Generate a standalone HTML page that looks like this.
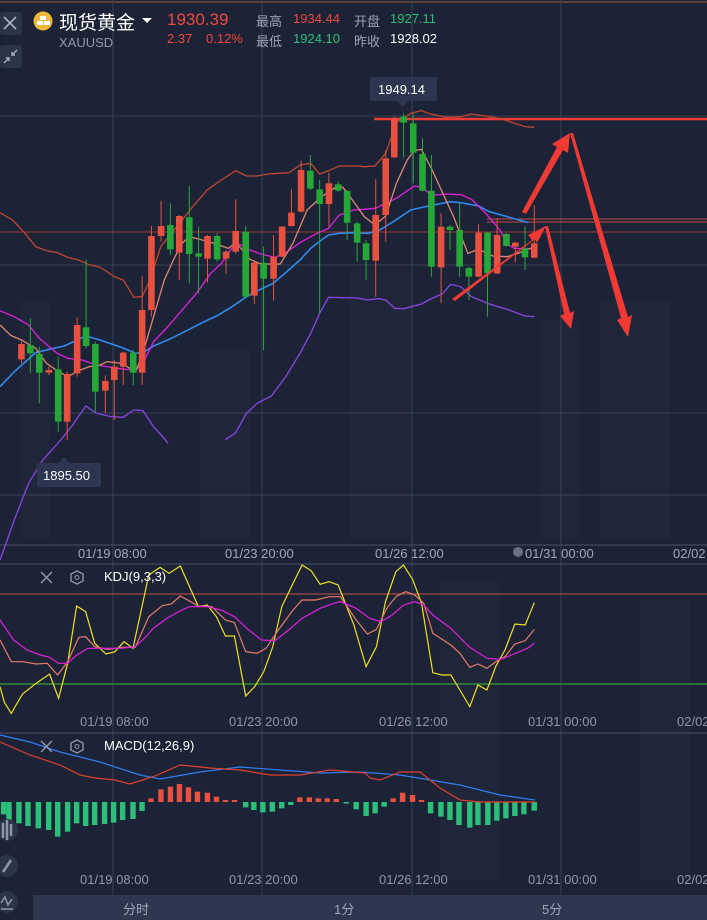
<!DOCTYPE html>
<html><head><meta charset="utf-8"><style>
html,body{margin:0;padding:0;background:#1c2336;width:707px;height:920px;overflow:hidden;font-family:"Liberation Sans","Noto Sans CJK SC",sans-serif}
.t{position:absolute;white-space:nowrap}
</style></head><body>
<svg width="707" height="920" style="position:absolute;left:0;top:0" xmlns="http://www.w3.org/2000/svg">
<rect width="707" height="920" fill="#1c2336"/>
<line x1="0" y1="2" x2="707" y2="2" stroke="#6e4a35" stroke-width="1.5"/>
<g fill="#1f2639">
<rect x="20" y="300" width="30" height="240"/><rect x="200" y="350" width="50" height="190"/><rect x="350" y="270" width="60" height="270"/><rect x="540" y="320" width="40" height="220"/><rect x="600" y="300" width="70" height="240"/><rect x="440" y="580" width="60" height="300"/><rect x="640" y="600" width="50" height="280"/>
</g>
<g stroke="#39415a" stroke-width="1">
<line x1="113" y1="0" x2="113" y2="895"/><line x1="262" y1="0" x2="262" y2="895"/><line x1="412" y1="0" x2="412" y2="895"/><line x1="561" y1="0" x2="561" y2="895"/>
<line x1="0" y1="116" x2="707" y2="116"/><line x1="0" y1="265" x2="707" y2="265"/><line x1="0" y1="413" x2="707" y2="413"/><line x1="0" y1="495" x2="707" y2="495"/>
<line x1="0" y1="545" x2="707" y2="545" stroke="#4a5268"/><line x1="0" y1="564" x2="707" y2="564" stroke="#4a5268"/><line x1="0" y1="733" x2="707" y2="733" stroke="#4a5268"/>
</g>
<line x1="0" y1="232" x2="707" y2="232" stroke="#9a3a35" stroke-width="1"/>
<line x1="487" y1="219" x2="707" y2="219" stroke="#c24a44" stroke-width="1"/>
<line x1="487" y1="222" x2="707" y2="222" stroke="#c24a44" stroke-width="1"/>
<line x1="374" y1="119" x2="707" y2="119" stroke="#ee3b36" stroke-width="2.5"/>
<g transform="translate(0,100) scale(0.35714,0.33333)" fill="none" stroke-width="1.3">
<polyline vector-effect="non-scaling-stroke" stroke="#c0462e" points="0,338 35,360 70,400 100,440 130,452 160,458 190,472 220,480 250,494 280,502 300,515 320,530 345,540 375,592 398,590 420,540 450,440 480,400 510,360 540,320 580,270 620,240 660,212 690,228 720,228 750,222 780,220 810,218 840,195 870,190 895,222 920,212 950,198 1000,198 1020,200 1050,198 1080,160 1110,68 1150,40 1180,32 1200,40 1250,52 1290,50 1320,42 1360,48 1400,55 1430,66 1470,80 1496,82"/>
<polyline vector-effect="non-scaling-stroke" stroke="#8a45e6" points="0,1380 40,1260 80,1150 120,1080 170,1020 200,980 240,918 270,940 310,950 345,952 375,930 400,932 430,980 460,1015 470,1030"/>
<polyline vector-effect="non-scaling-stroke" stroke="#8a45e6" points="630,1020 660,998 690,940 720,910 760,888 800,830 840,760 870,700 895,640 920,592 1000,594 1030,600 1060,596 1080,600 1105,625 1130,626 1180,612 1200,600 1240,580 1262,553 1290,560 1320,590 1370,612 1420,628 1470,648 1496,650"/>
<polyline vector-effect="non-scaling-stroke" stroke="#2e8bf0" stroke-width="1.6" points="0,860 40,815 100,758 150,745 180,738 240,708 280,720 340,742 380,760 400,758 430,738 480,715 530,688 570,666 610,646 650,620 690,590 720,573 765,550 800,518 840,480 870,445 900,420 920,405 950,400 990,398 1030,400 1060,392 1100,366 1150,330 1200,318 1260,305 1290,308 1340,318 1370,335 1420,350 1480,368"/>
<polyline vector-effect="non-scaling-stroke" stroke="#e21fe0" points="0,632 40,650 80,675 110,715 140,742 160,760 190,775 230,780 270,795 310,802 350,808 380,810 400,790 430,725 470,680 510,630 550,580 590,520 620,490 660,427 700,450 730,462 770,472 800,458 840,428 880,404 920,385 950,345 990,330 1020,328 1050,325 1080,310 1110,295 1160,258 1180,262 1210,286 1250,282 1290,284 1320,298 1360,340 1400,390 1420,432 1440,445 1496,447"/>
<polyline vector-effect="non-scaling-stroke" stroke="#e08870" points="0,675 30,706 60,720 100,745 130,790 160,812 190,830 220,812 250,800 280,795 300,785 340,790 380,815 400,760 430,650 460,540 490,470 510,430 530,410 560,418 600,430 640,445 660,426 700,478 730,492 785,492 820,430 860,330 900,290 940,262 960,262 980,290 1000,320 1020,350 1050,375 1080,348 1110,250 1140,180 1160,152 1180,148 1210,210 1240,280 1270,350 1310,460 1340,448 1380,468 1420,470 1450,460 1496,440"/>
</g>
<g id="candles"></g>
<g fill="#f23a35">
<polygon points="452,299 532,240 528,235 546,226 537,243 535,239 455,301"/>
<polygon points="522,212 557,147 552,144 570,133 568,153 563,150 526,214"/>
<polygon points="570,133 573,133 628,317 632,315 628,337 617,320 621,318"/>
<polygon points="545,226 548,226 570,313 574,311 571,329 560,316 564,314"/>
</g>
<line x1="0" y1="594" x2="707" y2="594" stroke="#c0504a"/>
<line x1="0" y1="684" x2="707" y2="684" stroke="#3bbf3b"/>
<g transform="translate(0,540) scale(0.45085,0.33333)" fill="none">
<polyline vector-effect="non-scaling-stroke" stroke="#f0e020" stroke-width="1.2" points="0,440 10,488 25,520 50,462 80,430 110,402 130,475 150,370 170,198 190,215 210,310 235,342 255,335 275,305 295,325 330,105 355,82 375,100 400,78 440,200 460,195 480,230 500,288 520,288 545,468 565,440 585,395 605,320 625,200 650,130 670,75 690,92 710,133 730,125 750,135 785,255 812,380 835,320 855,185 878,95 895,75 915,118 935,190 960,398 980,405 1000,405 1020,450 1042,500 1060,435 1080,450 1100,378 1120,330 1142,252 1165,255 1185,188"/>
<polyline vector-effect="non-scaling-stroke" stroke="#e87a68" stroke-width="1.2" points="0,300 25,365 50,365 80,372 105,370 128,405 150,365 175,292 190,290 210,320 240,328 270,322 300,322 330,230 360,197 380,192 400,168 440,198 470,200 500,240 520,248 545,335 570,340 590,325 620,265 650,210 670,180 700,180 730,170 755,170 790,240 815,282 835,268 860,200 880,168 900,155 920,165 940,190 960,280 1000,315 1020,340 1042,382 1060,372 1080,385 1100,365 1120,350 1142,312 1165,302 1185,268"/>
<polyline vector-effect="non-scaling-stroke" stroke="#e020e0" stroke-width="1.2" points="0,240 30,300 60,330 90,345 110,352 130,370 150,370 170,345 195,325 230,325 270,325 300,320 320,295 340,265 370,235 400,212 420,200 460,200 490,210 520,230 550,268 580,300 610,302 640,270 670,235 710,205 740,190 755,185 790,205 820,235 845,245 870,225 895,195 920,185 940,195 960,225 1000,265 1040,320 1080,355 1110,358 1140,342 1170,325 1185,310"/>
</g>
<g id="macd"></g>
<polyline fill="none" stroke="#2e7ef0" stroke-width="1.2" points="0,735 30,742 60,752 100,762 140,775 160,779 200,772 240,767 280,770 320,773 360,772 400,775 430,780 460,785 500,795 535,800"/>
<polyline fill="none" stroke="#e0402e" stroke-width="1.2" points="0,742 30,755 60,765 80,775 95,778 115,780 130,784 155,776 180,765 210,768 240,770 270,775 300,775 330,770 365,773 370,778 380,780 400,772 420,772 440,788 460,800 480,802 535,802"/>
<rect x="370" y="77" width="67" height="24" rx="2" fill="#2c3650"/>
<polygon points="397,101 409,101 403,107" fill="#2c3650"/>
<rect x="37" y="463" width="64" height="24" rx="2" fill="#2c3650"/>
<polygon points="58,463 70,463 64,457" fill="#2c3650"/>
<rect x="0" y="12" width="22" height="23" rx="3" fill="#2c3448"/>
<path d="M4,17 L16,29 M16,17 L4,29" stroke="#a8b0c0" stroke-width="1.6"/>
<rect x="0" y="45" width="22" height="23" rx="3" fill="#2c3448"/>
<path d="M4,63 L9,58 M6,58 H9 V61 M17,50 L12,55 M12,52 V55 H15" stroke="#a8b0c0" stroke-width="1.4" fill="none"/>
<circle cx="7" cy="830" r="11" fill="#2c3448"/><path d="M3,823 V838 M7,820 V840 M11,824 V836" stroke="#8e96a8" stroke-width="2.5"/>
<circle cx="7" cy="866" r="11" fill="#2c3448"/><path d="M3,872 L11,860" stroke="#8e96a8" stroke-width="2.5"/>
<circle cx="7" cy="902" r="11" fill="#2c3448"/><path d="M1,903 L5,897 L8,905 L12,899 M1,909 H13" stroke="#8e96a8" stroke-width="1.5" fill="none"/>
<path d="M41,572 L52,583 M52,572 L41,583" stroke="#8e96a8" stroke-width="1.5"/>
<polygon points="77,571 83,574 83,581 77,584 71,581 71,574" fill="none" stroke="#8e96a8" stroke-width="1.4"/><circle cx="77" cy="577.5" r="2" fill="none" stroke="#8e96a8"/>
<path d="M41,741 L52,752 M52,741 L41,752" stroke="#8e96a8" stroke-width="1.5"/>
<polygon points="77,740 83,743 83,750 77,753 71,750 71,743" fill="none" stroke="#8e96a8" stroke-width="1.4"/><circle cx="77" cy="746.5" r="2" fill="none" stroke="#8e96a8"/>
<circle cx="518" cy="552" r="5" fill="#6a7080"/>
<rect x="33" y="895" width="674" height="25" fill="#2e3750"/>
<circle cx="43" cy="21" r="9.5" fill="#f0b73a"/>
<rect x="40" y="16" width="6" height="4" fill="#fff"/><rect x="37" y="21" width="6" height="4" fill="#fff"/><rect x="44" y="21" width="6" height="4" fill="#fff"/>
<polygon points="142,18 152,18 147,23" fill="#fff"/>
</svg>
<div class="t" style="left:59px;top:8px;font-size:19px;color:#fff">现货黄金</div>
<div class="t" style="left:59px;top:35px;font-size:13px;color:#8e96a8">XAUUSD</div>
<div class="t" style="left:167px;top:10px;font-size:17px;color:#f0473f">1930.39</div>
<div class="t" style="left:167px;top:31px;font-size:13px;color:#f0473f">2.37</div>
<div class="t" style="left:206px;top:31px;font-size:13px;color:#f0473f">0.12%</div>
<div class="t" style="left:256px;top:11px;font-size:13px;color:#9aa2b2">最高</div>
<div class="t" style="left:293px;top:11px;font-size:13px;color:#f0473f">1934.44</div>
<div class="t" style="left:354px;top:11px;font-size:13px;color:#9aa2b2">开盘</div>
<div class="t" style="left:390px;top:11px;font-size:13px;color:#2bbf7a">1927.11</div>
<div class="t" style="left:256px;top:31px;font-size:13px;color:#9aa2b2">最低</div>
<div class="t" style="left:293px;top:31px;font-size:13px;color:#2bbf7a">1924.10</div>
<div class="t" style="left:354px;top:31px;font-size:13px;color:#9aa2b2">昨收</div>
<div class="t" style="left:390px;top:31px;font-size:13px;color:#fff">1928.02</div>
<div class="t" style="left:378px;top:82px;font-size:13px;color:#fff">1949.14</div>
<div class="t" style="left:43px;top:468px;font-size:13px;color:#fff">1895.50</div>
<div class="t" style="left:78px;top:546px;font-size:13px;color:#a0a8b8">01/19 08:00</div>
<div class="t" style="left:225px;top:546px;font-size:13px;color:#a0a8b8">01/23 20:00</div>
<div class="t" style="left:375px;top:546px;font-size:13px;color:#a0a8b8">01/26 12:00</div>
<div class="t" style="left:525px;top:546px;font-size:13px;color:#a0a8b8">01/31 00:00</div>
<div class="t" style="left:673px;top:546px;font-size:13px;color:#a0a8b8">02/02</div>
<div class="t" style="left:104px;top:569px;font-size:13px;color:#fff">KDJ(9,3,3)</div>
<div class="t" style="left:80px;top:714px;font-size:13px;color:#8e96a8">01/19 08:00</div>
<div class="t" style="left:229px;top:714px;font-size:13px;color:#8e96a8">01/23 20:00</div>
<div class="t" style="left:379px;top:714px;font-size:13px;color:#8e96a8">01/26 12:00</div>
<div class="t" style="left:528px;top:714px;font-size:13px;color:#8e96a8">01/31 00:00</div>
<div class="t" style="left:677px;top:714px;font-size:13px;color:#8e96a8">02/02</div>
<div class="t" style="left:104px;top:738px;font-size:13px;color:#fff">MACD(12,26,9)</div>
<div class="t" style="left:80px;top:872px;font-size:13px;color:#8e96a8">01/19 08:00</div>
<div class="t" style="left:229px;top:872px;font-size:13px;color:#8e96a8">01/23 20:00</div>
<div class="t" style="left:379px;top:872px;font-size:13px;color:#8e96a8">01/26 12:00</div>
<div class="t" style="left:528px;top:872px;font-size:13px;color:#8e96a8">01/31 00:00</div>
<div class="t" style="left:677px;top:872px;font-size:13px;color:#8e96a8">02/02</div>
<div class="t" style="left:123px;top:899px;font-size:13px;color:#a0a8b8">分时</div>
<div class="t" style="left:334px;top:899px;font-size:13px;color:#a0a8b8">1分</div>
<div class="t" style="left:542px;top:899px;font-size:13px;color:#a0a8b8">5分</div>
<script>
var C=[[60,732,778,725,790,'r'],[85,735,760,655,820,'g'],[110,762,818,740,910,'g'],[137,810,818,800,825,'r'],[163,808,965,770,995,'g'],[188,822,965,815,1020,'r'],[216,675,820,652,830,'r'],[241,682,738,478,745,'g'],[267,732,875,725,935,'g'],[295,843,872,826,940,'r'],[320,800,840,780,960,'r'],[345,758,800,755,855,'r'],[373,758,818,750,855,'g'],[398,630,818,528,855,'r'],[424,408,630,378,650,'r'],[451,378,408,302,425,'r'],[477,375,448,310,465,'g'],[502,348,458,345,540,'r'],[530,352,462,258,550,'g'],[556,460,470,380,580,'g'],[581,408,476,405,548,'r'],[608,408,478,400,485,'g'],[633,455,476,450,522,'r'],[660,393,455,298,460,'r'],[688,395,590,378,595,'g'],[712,488,587,485,612,'r'],[738,488,536,440,750,'g'],[766,470,536,405,602,'r'],[790,380,470,378,472,'r'],[816,338,378,268,380,'r'],[843,210,335,182,338,'r'],[869,212,266,165,270,'g'],[895,268,312,240,640,'g'],[921,250,312,218,380,'r'],[947,253,272,245,275,'g'],[972,273,368,270,420,'g'],[1000,370,428,365,485,'g'],[1025,430,480,420,540,'g'],[1052,345,482,238,590,'r'],[1080,175,345,150,425,'r'],[1104,55,172,50,175,'r'],[1130,50,68,40,172,'g'],[1157,70,158,40,250,'g'],[1183,162,272,115,275,'g'],[1208,272,500,165,530,'g'],[1235,380,502,340,610,'r'],[1260,380,390,375,450,'g'],[1287,390,500,310,530,'g'],[1313,504,530,500,600,'g'],[1340,398,530,372,532,'r'],[1365,398,520,396,650,'g'],[1392,405,520,355,522,'r'],[1418,402,438,400,440,'g'],[1443,428,440,425,488,'r'],[1470,445,472,380,510,'g'],[1496,430,473,316,475,'r']];
var s='',sx=1/2.8,sy=1/3;
C.forEach(function(c){var x=c[0]*sx,col=c[5]=='r'?'#e8503f':'#25a838';
s+='<line x1="'+x+'" y1="'+(100+c[3]*sy)+'" x2="'+x+'" y2="'+(100+c[4]*sy)+'" stroke="'+col+'" stroke-width="1"/>';
s+='<rect x="'+(x-3.3)+'" y="'+(100+c[1]*sy)+'" width="6.6" height="'+Math.max(1.5,(c[2]-c[1])*sy)+'" fill="'+col+'"/>';});
document.getElementById('candles').innerHTML=s;
var M=[[8,103],[20,125],[42,130],[62,138],[85,145],[108,150],[128,170],[150,155],[170,130],[190,138],[210,135],[232,132],[252,128],[272,120],[295,117],[315,93],[335,55],[357,28],[378,20],[398,12],[418,22],[438,35],[460,38],[480,50],[500,60],[520,60],[545,82],[563,90],[583,97],[604,95],[625,85],[645,75],[665,52],[686,52],[706,55],[726,55],[746,57],[768,70],[790,88],[812,108],[832,100],[852,80],[872,55],[893,38],[915,45],[935,60],[955,100],[978,110],[998,120],[1018,135],[1042,143],[1060,135],[1082,135],[1102,122],[1122,115],[1142,108],[1162,103],[1185,92]];
var m='';M.forEach(function(b){var x=b[0]/2.218,y=780+b[1]/3,z=802,up=y<z;
m+='<rect x="'+(x-2.7)+'" y="'+(up?y:z)+'" width="5.4" height="'+Math.max(1.5,Math.abs(y-z))+'" fill="'+(up?'#e8503f':'#2bbf7a')+'"/>';});
document.getElementById('macd').innerHTML=m;
</script>
</body></html>
